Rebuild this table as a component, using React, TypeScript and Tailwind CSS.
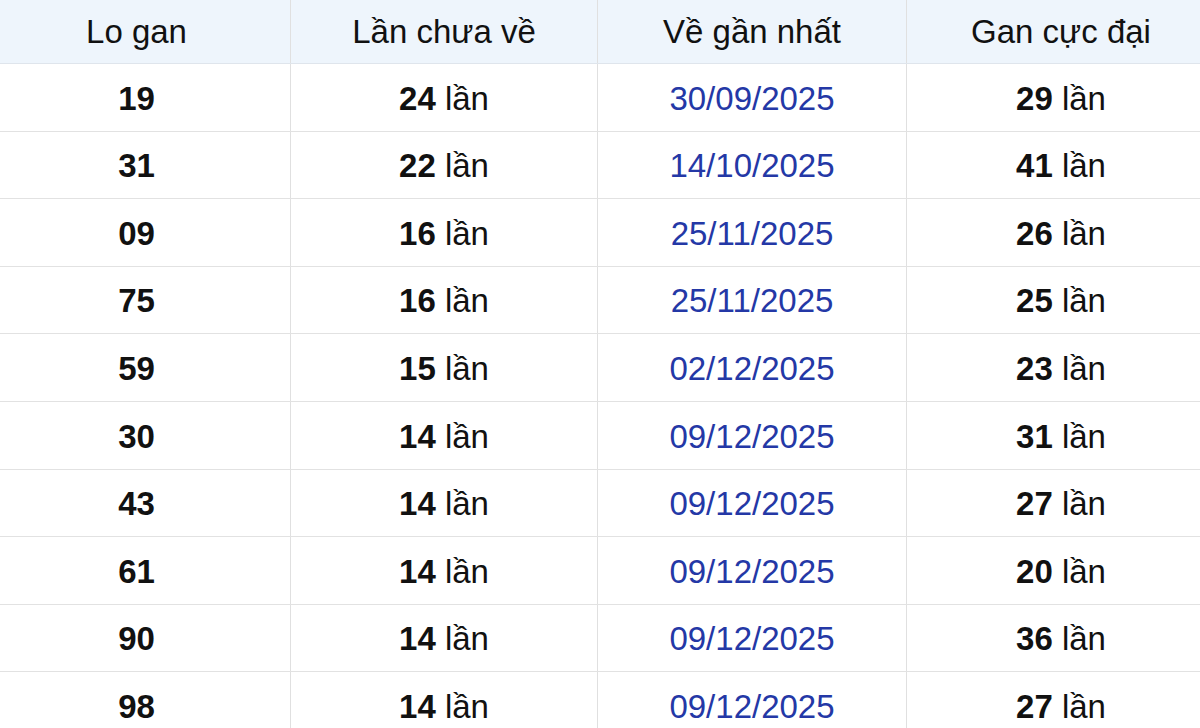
import React from "react";

const rows = [
  ["19", "24", "30/09/2025", "29"],
  ["31", "22", "14/10/2025", "41"],
  ["09", "16", "25/11/2025", "26"],
  ["75", "16", "25/11/2025", "25"],
  ["59", "15", "02/12/2025", "23"],
  ["30", "14", "09/12/2025", "31"],
  ["43", "14", "09/12/2025", "27"],
  ["61", "14", "09/12/2025", "20"],
  ["90", "14", "09/12/2025", "36"],
  ["98", "14", "09/12/2025", "27"],
];

export default function App() {
  return (
    <div
      className="w-[1200px] h-[728px] overflow-hidden bg-white text-[#111]"
      style={{ fontFamily: '"Liberation Sans", Arial, sans-serif' }}
    >
      <div className="ml-[-17px] w-[1232px]">
        <div className="grid grid-cols-[308px_307px_309px_308px] h-[64px] bg-[#eef5fc] border-b border-[#dfe5ec] text-[33px]">
          <div className="flex items-center justify-center border-r border-[#e0e0e0] pt-[1px]">Lo gan</div>
          <div className="flex items-center justify-center border-r border-[#e0e0e0] pt-[1px]">Lần chưa về</div>
          <div className="flex items-center justify-center border-r border-[#e0e0e0] pt-[1px]">Về gần nhất</div>
          <div className="flex items-center justify-center pt-[1px]">Gan cực đại</div>
        </div>
        {rows.map((r, i) => (
          <div
            key={i}
            className="grid grid-cols-[308px_307px_309px_308px] h-[67.6px] border-b border-[#e2e2e2] text-[33px]"
          >
            <div className="flex items-center justify-center border-r border-[#e0e0e0] font-bold pt-[2px]">{r[0]}</div>
            <div className="flex items-center justify-center border-r border-[#e0e0e0] pt-[2px]">
              <span className="font-bold">{r[1]}</span>&nbsp;lần
            </div>
            <div className="flex items-center justify-center border-r border-[#e0e0e0] text-[#2438a6] pt-[2px]">{r[2]}</div>
            <div className="flex items-center justify-center pt-[2px]">
              <span className="font-bold">{r[3]}</span>&nbsp;lần
            </div>
          </div>
        ))}
      </div>
    </div>
  );
}
